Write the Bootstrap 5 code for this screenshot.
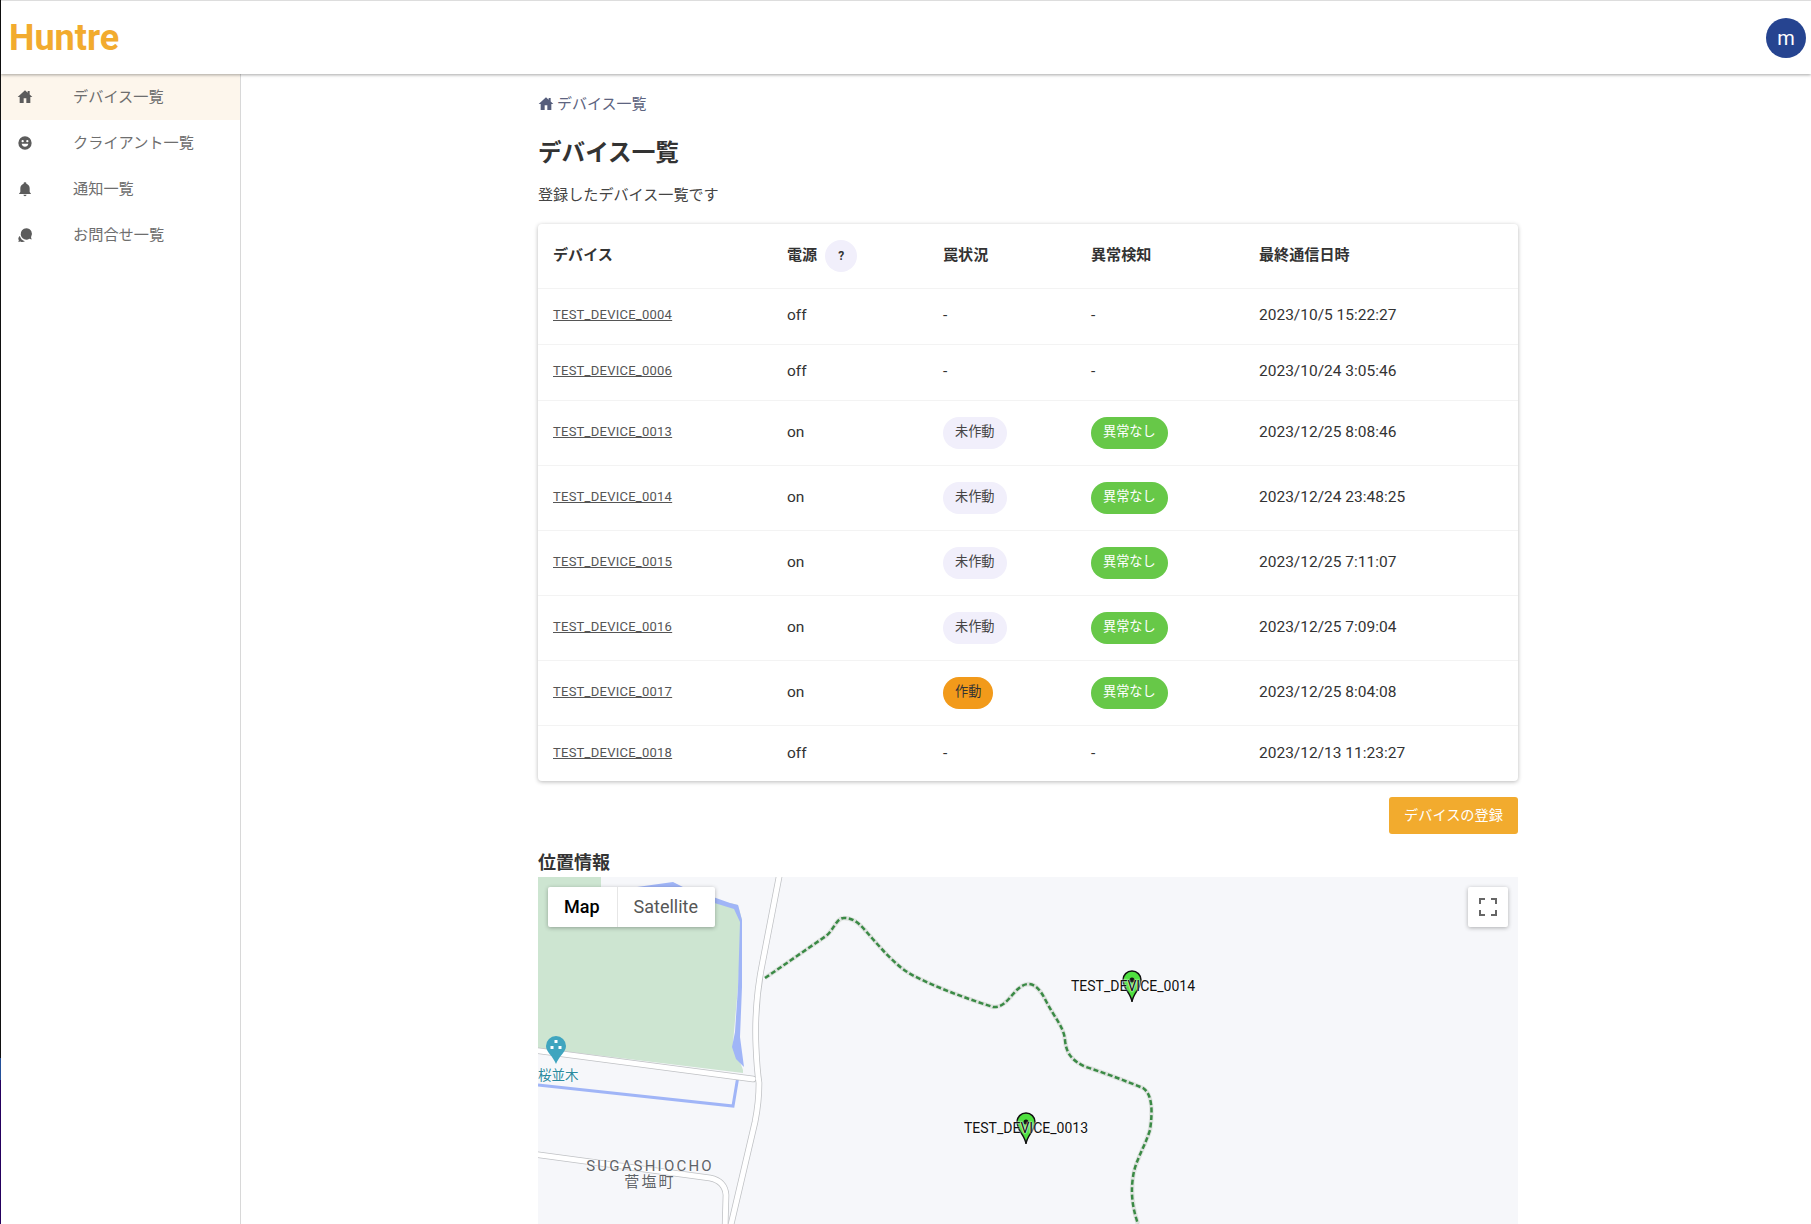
<!DOCTYPE html>
<html lang="ja">
<head>
    <meta charset="UTF-8">
    <meta name="viewport" content="width=device-width, initial-scale=1.0">
    <title>Huntre - デバイス一覧</title>
    <link href="https://cdn.jsdelivr.net/npm/bootstrap@5.3.0/dist/css/bootstrap.min.css" rel="stylesheet">
    <style>
        html, body {
            height: 100%;
            overflow: hidden;
        }

        body {
            font-family: Roboto, "Noto Sans CJK JP", sans-serif;
            font-size: 15px;
            color: #333;
            background-color: #fff;
        }

        /* Desktop edge showing at the left of the window */
        .screen-edge {
            width: 1px;
            flex-shrink: 0;
            background: linear-gradient(to bottom, #111 0, #111 1058px, #24509a 1058px, #24509a 1080px, #25005e 1080px);
        }

        .app-area {
            min-width: 0;
        }

        /* Header */
        .app-header {
            height: 75px;
            padding: 0 5px 0 8px;
            border-top: 1px solid #ddd;
            box-shadow: 0 1px 3px rgba(0, 0, 0, 0.35);
            position: relative;
            z-index: 2;
        }

        .app-logo {
            font-size: 36px;
            font-weight: 700;
            line-height: 1;
            padding: 0;
            margin: 0;
            color: #f2ab2e;
        }

        .app-avatar {
            width: 40px;
            height: 40px;
            font-size: 20px;
            color: #fff;
            background-color: #264490;
        }

        /* Sidebar */
        .side-menu {
            width: 240px;
            flex-shrink: 0;
            border-right: 1px solid #d8d8d8;
        }

        .side-link {
            height: 46px;
            padding: 0 0 0 16px;
            color: #6e6e6e;
            font-size: 15.2px;
        }

        .side-link:hover {
            color: #6e6e6e;
        }

        .side-link.current {
            background-color: #fdf6ec;
        }

        .side-icon {
            width: 16px;
            height: 16px;
            margin-right: 40px;
            fill: #5c5c5c;
        }

        /* Main column */
        .page-body {
            width: 980px;
            margin-left: 297px;
        }

        .crumb-line {
            margin: 0;
            padding-top: 17px;
            height: 43px;
            color: #5d6480;
            font-size: 15px;
            line-height: 26px;
        }

        .crumb-icon {
            width: 16px;
            height: 16px;
            margin-right: 3px;
            fill: #555d7c;
            vertical-align: -3px;
        }

        .page-title {
            font-size: 23.6px;
            font-weight: 700;
            line-height: 36px;
            margin: 0;
            padding-top: 18px;
            color: #333;
        }

        .page-lead {
            font-size: 15.1px;
            line-height: 24px;
            margin: 12px 0 17px;
            color: #444;
        }

        /* Device table */
        .device-card {
            border: 0;
            border-radius: 4px;
            box-shadow: 0 1px 4px rgba(0, 0, 0, 0.28);
        }

        .device-table {
            table-layout: fixed;
            margin: 0;
            --bs-table-border-color: #f3f3f3;
            color: #333;
        }

        .device-table th,
        .device-table td {
            padding: 0 15px;
            vertical-align: middle;
            font-size: 15.5px;
        }

        .device-table th {
            height: 64px;
            font-weight: 700;
            font-size: 15.1px;
        }

        .device-table tr:last-child td {
            border-bottom: 0;
        }

        .row-plain td {
            height: 56px;
        }

        .row-chip td {
            height: 65px;
        }

        .device-link {
            color: #555;
            font-size: 13px;
            letter-spacing: 0.25px;
            position: relative;
            top: -1px;
        }

        .help-dot {
            width: 32px;
            height: 32px;
            margin-left: 5px;
            font-size: 12px;
            font-weight: 700;
            background-color: #f1effb;
            color: #333;
        }

        .state-chip {
            display: inline-block;
            height: 32px;
            padding: 0 12px;
            border-radius: 16px;
            font-size: 13.2px;
            font-weight: 400;
            line-height: 29px;
        }

        .chip-idle {
            background-color: #f1effb;
            color: #444;
        }

        .chip-ok {
            background-color: #67c848;
            color: #fff;
        }

        .chip-fired {
            background-color: #f29a1a;
            color: #333;
        }

        .register-btn {
            height: 37px;
            width: 129px;
            padding: 0;
            font-size: 14.2px;
            border: 0;
            border-radius: 3px;
            color: #fff;
            background-color: #f2ab2e;
        }

        .register-btn:hover {
            color: #fff;
            background-color: #e09c22;
        }

        .block-title {
            font-size: 18px;
            font-weight: 700;
            line-height: 28px;
            margin: 15px 0 0;
            color: #333;
        }

        /* Map */
        .map-box {
            height: 347px;
            background-color: #f6f7fa;
            overflow: hidden;
        }

        .map-art {
            display: block;
            width: 980px;
            height: 347px;
        }

        .map-switch {
            position: absolute;
            top: 10px;
            left: 10px;
            height: 40px;
            background-color: #fff;
            border-radius: 2px;
            box-shadow: 0 1px 4px rgba(0, 0, 0, 0.3);
            font-size: 18px;
        }

        .map-switch span {
            line-height: 40px;
            padding: 0 17px 0 16px;
        }

        .map-switch .on {
            font-weight: 500;
            color: #000;
            border-right: 1px solid #e6e6e6;
        }

        .map-switch .off {
            color: #565656;
        }

        .map-full {
            position: absolute;
            top: 10px;
            right: 10px;
            width: 40px;
            height: 40px;
            background-color: #fff;
            border-radius: 2px;
            box-shadow: 0 1px 4px rgba(0, 0, 0, 0.3);
        }

        .map-label {
            position: absolute;
            white-space: nowrap;
            line-height: 20px;
            text-shadow: 0 0 2px #fff, 0 0 2px #fff;
        }

        .pin-label {
            font-size: 14px;
            color: #111;
            transform: translateX(-50%);
        }

        .place-label {
            font-size: 15px;
            letter-spacing: 2.2px;
            color: #5f6368;
            text-align: center;
            transform: translateX(-50%);
        }

        .poi-label {
            font-size: 13.5px;
            color: #2b8a9e;
        }
    </style>
</head>
<body>
    <div class="d-flex h-100">
        <div class="screen-edge"></div>
        <div class="app-area flex-grow-1 d-flex flex-column">

            <header class="navbar app-header bg-white flex-nowrap">
                <a class="navbar-brand app-logo" href="#">Huntre</a>
                <div class="app-avatar rounded-circle d-flex align-items-center justify-content-center">m</div>
            </header>

            <div class="d-flex flex-grow-1">
                <nav class="side-menu nav flex-column flex-nowrap">
                    <a class="nav-link side-link current d-flex align-items-center" href="#">
                        <svg class="side-icon" viewBox="0 0 24 24"><path d="M10 21v-7h4v7h6v-9h3L19 8.400V3h-3v2.700L12 2 1 12h3v9z"/></svg>
                        デバイス一覧
                    </a>
                    <a class="nav-link side-link d-flex align-items-center" href="#">
                        <svg class="side-icon" viewBox="0 0 24 24"><path fill-rule="evenodd" d="M12 2a10 10 0 1 0 0 20 10 10 0 0 0 0-20zM8.500 7.500a1.700 1.700 0 1 1 0 3.400 1.700 1.700 0 0 1 0-3.400zm7 0a1.700 1.700 0 1 1 0 3.400 1.700 1.700 0 0 1 0-3.400zM7 13h10c-.5 2.800-2.500 4.500-5 4.500S7.500 15.800 7 13z"/></svg>
                        クライアント一覧
                    </a>
                    <a class="nav-link side-link d-flex align-items-center" href="#">
                        <svg class="side-icon" viewBox="0 0 24 24"><path d="M12 23c1.300 0 2.300-1 2.300-2.200H9.700C9.700 22 10.700 23 12 23zm7-6.500V11c0-3.300-1.900-6-5-6.800V3.500C14 2.600 13.100 2 12 2s-2 .6-2 1.500v.7C6.900 5 5 7.700 5 11v5.500L3 19v.5h18V19z"/></svg>
                        通知一覧
                    </a>
                    <a class="nav-link side-link d-flex align-items-center" href="#">
                        <svg class="side-icon" viewBox="0 0 24 24"><path d="M14 2a8.500 8.500 0 0 0-8.400 9.800C6.300 16 9.800 19 14 19c1.700 0 3.200-.4 4.500-1.300l3.500 1-1-3.400A8.500 8.500 0 0 0 14 2z"/><path d="M4.300 13.500C2.900 14.600 2 16 2 17.500c0 .9.300 1.700.8 2.400L2 22.500l3-.8c1 .5 2 .8 3.200.8 1.400 0 2.700-.4 3.700-1.100-3.700-.9-6.600-4-7.600-7.900z"/></svg>
                        お問合せ一覧
                    </a>
                </nav>

                <main class="page-body">
                    <p class="crumb-line">
                        <svg class="crumb-icon" viewBox="0 0 24 24"><path d="M10 21v-7h4v7h6v-9h3L19 8.400V3h-3v2.700L12 2 1 12h3v9z"/></svg>デバイス一覧
                    </p>
                    <h1 class="page-title">デバイス一覧</h1>
                    <p class="page-lead">登録したデバイス一覧です</p>

                    <div class="card device-card">
                        <table class="table device-table">
                            <colgroup>
                                <col style="width: 234px">
                                <col style="width: 156px">
                                <col style="width: 148px">
                                <col style="width: 168px">
                                <col>
                            </colgroup>
                            <thead>
                                <tr>
                                    <th>デバイス</th>
                                    <th><div class="d-flex align-items-center">電源<span class="help-dot rounded-circle d-inline-flex align-items-center justify-content-center ms-2">?</span></div></th>
                                    <th>罠状況</th>
                                    <th>異常検知</th>
                                    <th>最終通信日時</th>
                                </tr>
                            </thead>
                            <tbody>
                                <tr class="row-plain"><td><a class="device-link" href="#">TEST_DEVICE_0004</a></td><td>off</td><td>-</td><td>-</td><td>2023/10/5 15:22:27</td></tr>
                                <tr class="row-plain"><td><a class="device-link" href="#">TEST_DEVICE_0006</a></td><td>off</td><td>-</td><td>-</td><td>2023/10/24 3:05:46</td></tr>
                                <tr class="row-chip"><td><a class="device-link" href="#">TEST_DEVICE_0013</a></td><td>on</td><td><span class="state-chip chip-idle">未作動</span></td><td><span class="state-chip chip-ok">異常なし</span></td><td>2023/12/25 8:08:46</td></tr>
                                <tr class="row-chip"><td><a class="device-link" href="#">TEST_DEVICE_0014</a></td><td>on</td><td><span class="state-chip chip-idle">未作動</span></td><td><span class="state-chip chip-ok">異常なし</span></td><td>2023/12/24 23:48:25</td></tr>
                                <tr class="row-chip"><td><a class="device-link" href="#">TEST_DEVICE_0015</a></td><td>on</td><td><span class="state-chip chip-idle">未作動</span></td><td><span class="state-chip chip-ok">異常なし</span></td><td>2023/12/25 7:11:07</td></tr>
                                <tr class="row-chip"><td><a class="device-link" href="#">TEST_DEVICE_0016</a></td><td>on</td><td><span class="state-chip chip-idle">未作動</span></td><td><span class="state-chip chip-ok">異常なし</span></td><td>2023/12/25 7:09:04</td></tr>
                                <tr class="row-chip"><td><a class="device-link" href="#">TEST_DEVICE_0017</a></td><td>on</td><td><span class="state-chip chip-fired">作動</span></td><td><span class="state-chip chip-ok">異常なし</span></td><td>2023/12/25 8:04:08</td></tr>
                                <tr class="row-plain"><td><a class="device-link" href="#">TEST_DEVICE_0018</a></td><td>off</td><td>-</td><td>-</td><td>2023/12/13 11:23:27</td></tr>
                            </tbody>
                        </table>
                    </div>

                    <div class="d-flex justify-content-end mt-3">
                        <button class="btn register-btn" type="button">デバイスの登録</button>
                    </div>

                    <h2 class="block-title">位置情報</h2>

                    <div class="map-box position-relative">
                        <svg class="map-art" viewBox="0 0 980 347" fill="none">
                            <!-- park and water -->
                            <path d="M0 0H63V12L192 26 200 28 204 43 200 110 195 166 205 193V196L0 171Z" fill="#cde5d1"/>
                            <path d="M99 10 135 5 145 10 178 21 192 26 200 28 204 43 204 110 202 160 206 190 198 182 194 170 197 155 200 110 202 45 196 32 170 24 138 10Z" fill="#a0b5f7"/>
                            <path d="M0 208 195 229 200 199" stroke="#a0b5f7" stroke-width="3"/>
                            <!-- roads -->
                            <g stroke="#bfc1c4" stroke-width="6.500" stroke-linecap="round">
                                <path d="M-5 173 215 202"/>
                                <path d="M-5 277 172 301Q187 304 188 318L187 352"/>
                                <path d="M242-5 225 83Q216 126 218 170 219 193 221 206 221 225 217 245L192 352"/>
                            </g>
                            <g stroke="#fff" stroke-width="5" stroke-linecap="round">
                                <path d="M-5 173 215 202"/>
                                <path d="M-5 277 172 301Q187 304 188 318L187 352"/>
                                <path d="M242-5 225 83Q216 126 218 170 219 193 221 206 221 225 217 245L192 352"/>
                            </g>
                            <!-- device trace -->
                            <path d="M227 101 288 59C296 53 298 41 306 41 314 41 320 45 326 52 342 70 358 90 376 99 402 112 430 122 455 130 470 132 476 108 490 107 498 107 503 114 508 124 516 140 526 150 527 163 528 176 534 184 548 190 570 197 590 205 605 211 614 217 615 233 612 253 606 272 597 284 595 300 592 320 596 335 600 347" stroke="#dfe3e0" stroke-width="4.500"/>
                            <path d="M227 101 288 59C296 53 298 41 306 41 314 41 320 45 326 52 342 70 358 90 376 99 402 112 430 122 455 130 470 132 476 108 490 107 498 107 503 114 508 124 516 140 526 150 527 163 528 176 534 184 548 190 570 197 590 205 605 211 614 217 615 233 612 253 606 272 597 284 595 300 592 320 596 335 600 347" stroke="#3a8a45" stroke-width="2.500" stroke-dasharray="5 2.500"/>
                            <!-- poi pin -->
                            <path d="M18 159a10 10 0 0 1 10 10c0 6-7 10-10 18-3-8-10-12-10-18a10 10 0 0 1 10-10z" fill="#3fa5bf"/>
                            <g fill="#fff"><rect x="16.500" y="163" width="3" height="3"/><rect x="12.500" y="169" width="3" height="3"/><rect x="20.500" y="169" width="3" height="3"/></g>
                            <!-- device pins -->
                            <g stroke="#111" stroke-width="1.500" fill="#4fe03f">
                                <path d="M594 125c-1-9-9-13-9-22a9 9 0 0 1 18 0c0 9-8 13-9 22z"/>
                                <path d="M488 267c-1-9-9-13-9-22a9 9 0 0 1 18 0c0 9-8 13-9 22z"/>
                            </g>
                            <circle cx="594" cy="103" r="2.500" fill="#111"/>
                            <circle cx="488" cy="245" r="2.500" fill="#111"/>
                        </svg>

                        <div class="map-label poi-label" style="left: 0; top: 188px">桜並木</div>
                        <div class="map-label place-label" style="left: 112px; top: 281px; line-height: 16px">SUGASHIOCHO<br>菅塩町</div>
                        <div class="map-label pin-label" style="left: 595px; top: 99px">TEST_DEVICE_0014</div>
                        <div class="map-label pin-label" style="left: 488px; top: 241px">TEST_DEVICE_0013</div>

                        <div class="map-switch d-flex">
                            <span class="on">Map</span>
                            <span class="off">Satellite</span>
                        </div>
                        <div class="map-full d-flex align-items-center justify-content-center">
                            <svg width="18" height="18" viewBox="0 0 18 18" fill="#666"><path d="M0 0h6v2H2v4H0zM12 0h6v6h-2V2h-4zM0 12h2v4h4v2H0zM16 12h2v6h-6v-2h4z"/></svg>
                        </div>
                    </div>
                </main>
            </div>
        </div>
    </div>

    <script src="https://cdn.jsdelivr.net/npm/bootstrap@5.3.0/dist/js/bootstrap.bundle.min.js"></script>
</body>
</html>
